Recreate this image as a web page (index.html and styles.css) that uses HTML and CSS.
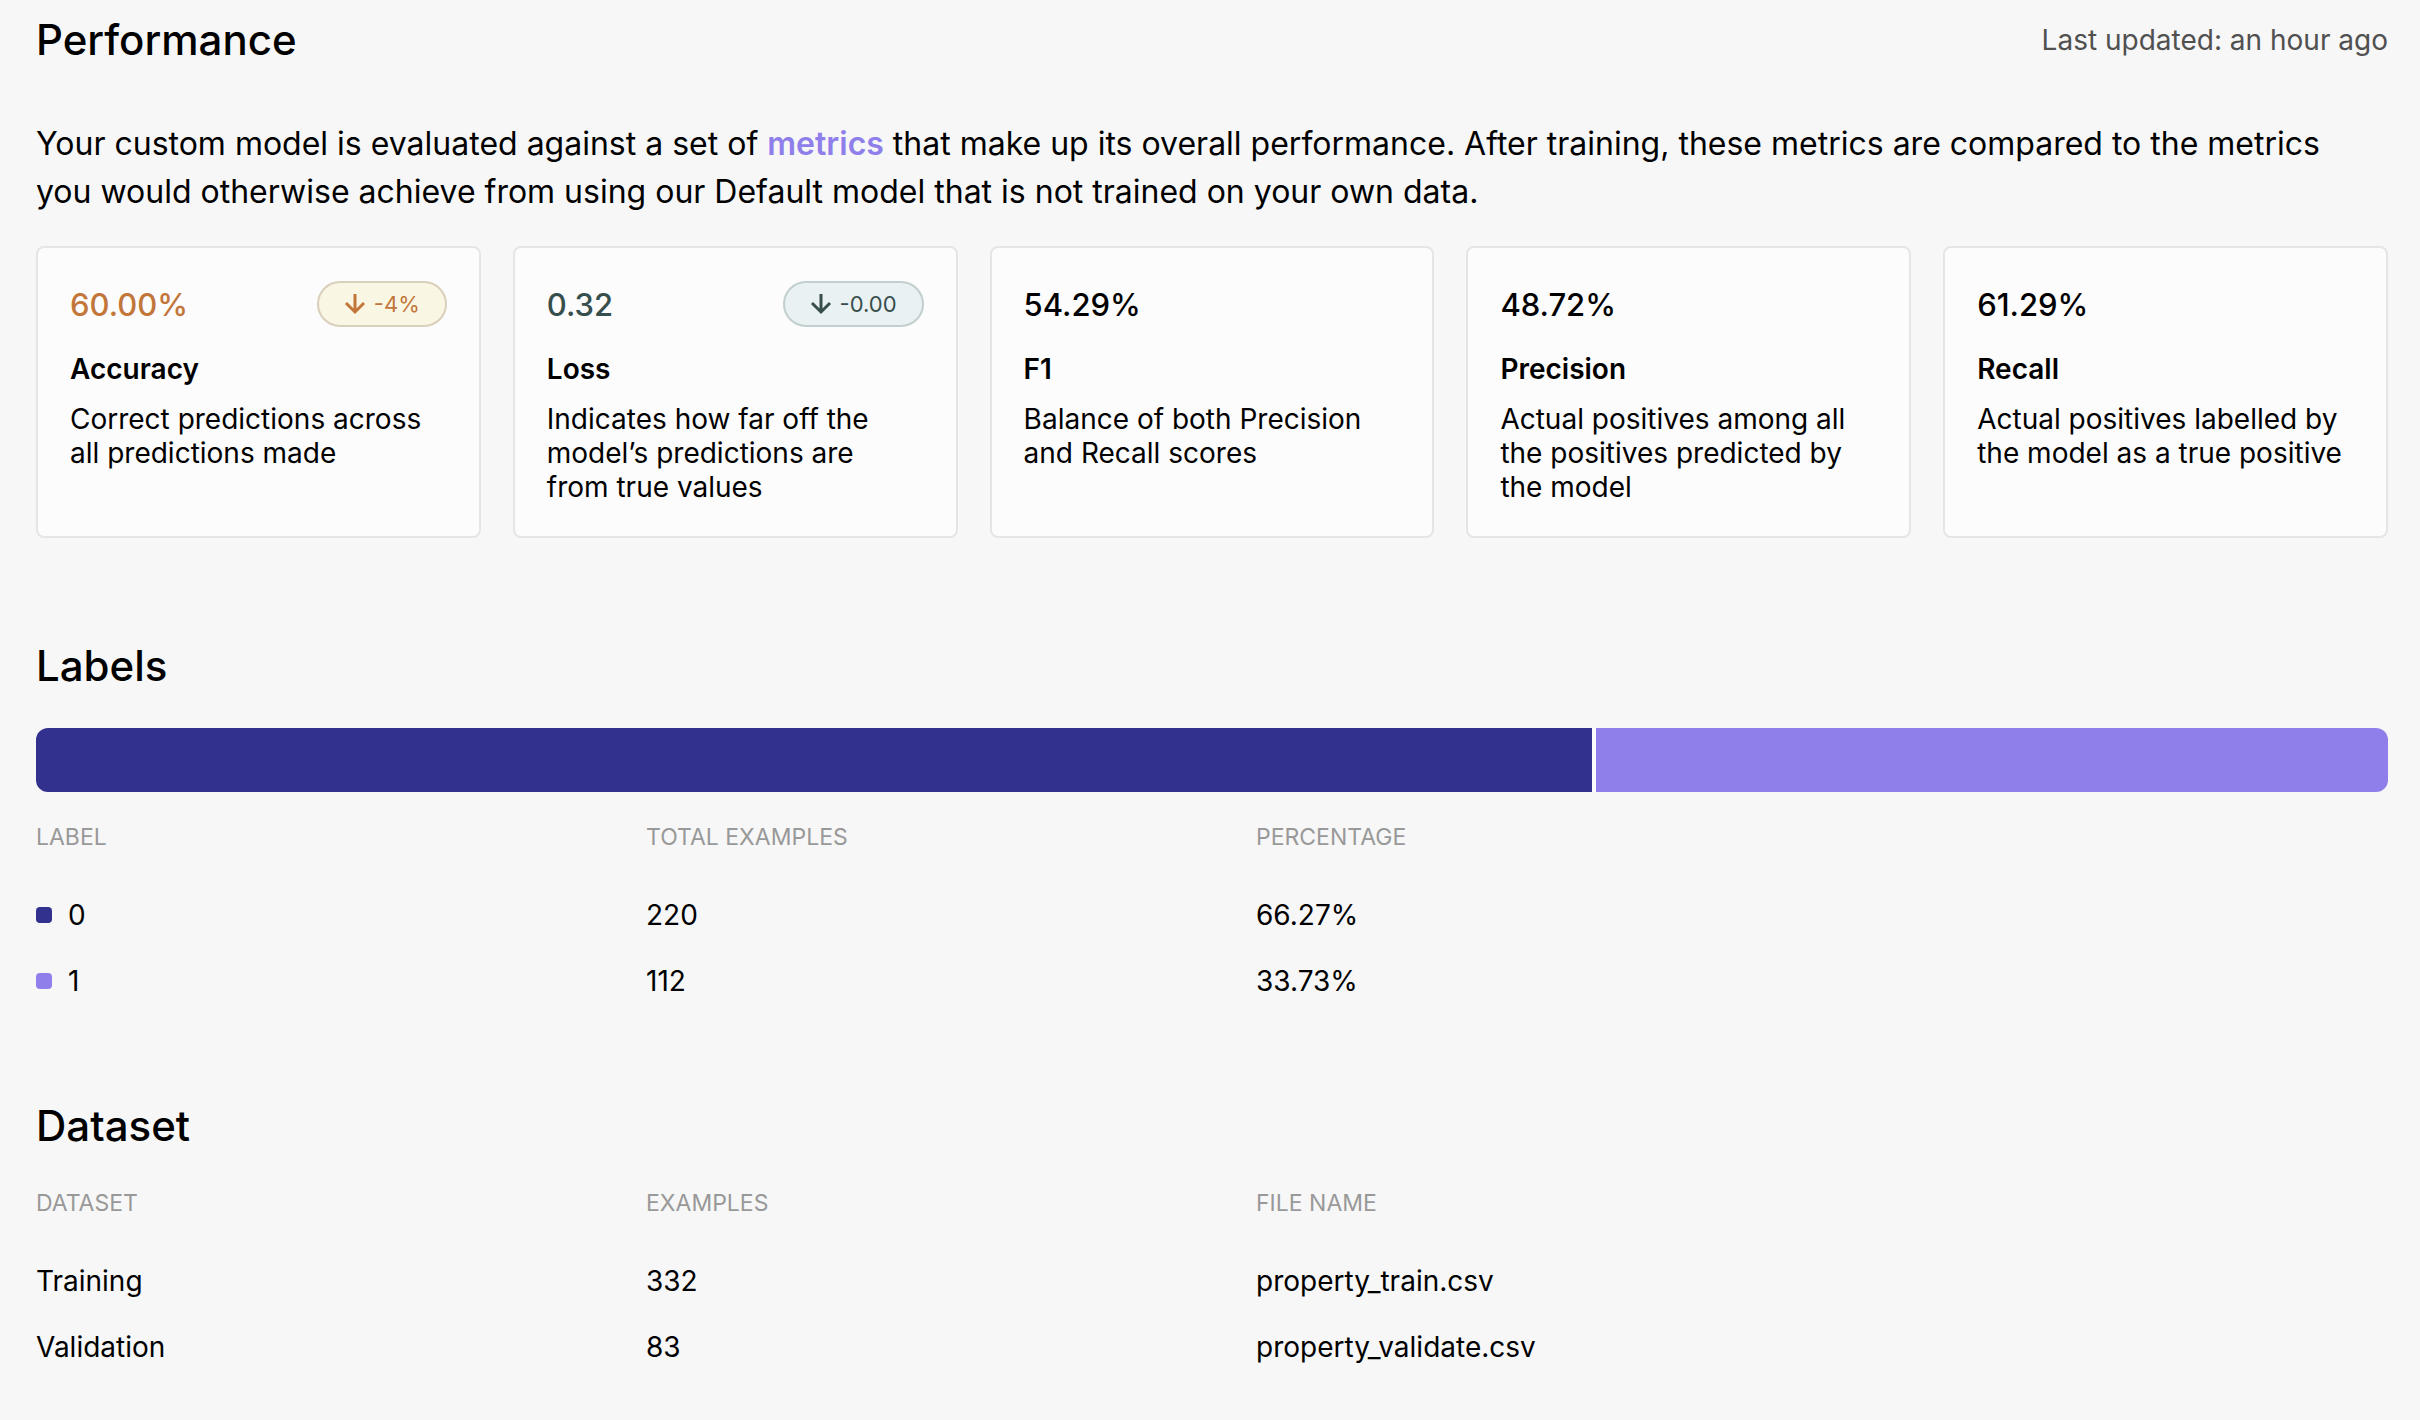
FILE: index.html
```html
<!DOCTYPE html>
<html lang="en">
<head>
<meta charset="utf-8">
<meta name="viewport" content="width=device-width, initial-scale=1">
<title>Model performance</title>
<link rel="stylesheet" href="styles.css">
</head>
<body>
<main class="page">
  <section class="section">
    <header class="section-header">
      <h2 class="title">Performance</h2>
      <p class="updated">Last updated: an hour ago</p>
    </header>
    <p class="intro">Your custom model is evaluated against a set of <a class="link" href="#metrics">metrics</a> that make up its overall performance. After training, these metrics are compared to the metrics you would otherwise achieve from using our Default model that is not trained on your own data.</p>
    <div class="cards" id="metrics">
      <article class="card">
        <div class="card-top">
          <span class="value value-worse">60.00%</span>
          <span class="badge badge-worse">
            <svg class="arrow" viewBox="0 0 22 22" aria-hidden="true"><path d="M11 1v18M2 10l9 9 9-9"/></svg>
            -4%
          </span>
        </div>
        <h3 class="card-name">Accuracy</h3>
        <p class="card-text">Correct predictions across all predictions made</p>
      </article>
      <article class="card">
        <div class="card-top">
          <span class="value value-better">0.32</span>
          <span class="badge badge-better">
            <svg class="arrow" viewBox="0 0 22 22" aria-hidden="true"><path d="M11 1v18M2 10l9 9 9-9"/></svg>
            -0.00
          </span>
        </div>
        <h3 class="card-name">Loss</h3>
        <p class="card-text">Indicates how far off the model’s predictions are from true values</p>
      </article>
      <article class="card">
        <div class="card-top"><span class="value">54.29%</span></div>
        <h3 class="card-name">F1</h3>
        <p class="card-text">Balance of both Precision and Recall scores</p>
      </article>
      <article class="card">
        <div class="card-top"><span class="value">48.72%</span></div>
        <h3 class="card-name">Precision</h3>
        <p class="card-text">Actual positives among all the positives predicted by the model</p>
      </article>
      <article class="card">
        <div class="card-top"><span class="value">61.29%</span></div>
        <h3 class="card-name">Recall</h3>
        <p class="card-text">Actual positives labelled by the model as a true positive</p>
      </article>
    </div>
  </section>

  <section class="section">
    <h2 class="title">Labels</h2>
    <div class="bar" role="img" aria-label="Label 0: 66.27%, label 1: 33.73%">
      <div class="bar-part fill-0" style="flex-grow: 66.27"></div>
      <div class="bar-part fill-1" style="flex-grow: 33.73"></div>
    </div>
    <table class="table">
      <thead>
        <tr><th scope="col">LABEL</th><th scope="col">TOTAL EXAMPLES</th><th scope="col">PERCENTAGE</th></tr>
      </thead>
      <tbody>
        <tr><td><span class="label"><span class="swatch fill-0"></span>0</span></td><td>220</td><td>66.27%</td></tr>
        <tr><td><span class="label"><span class="swatch fill-1"></span>1</span></td><td>112</td><td>33.73%</td></tr>
      </tbody>
    </table>
  </section>

  <section class="section">
    <h2 class="title">Dataset</h2>
    <table class="table">
      <thead>
        <tr><th scope="col">DATASET</th><th scope="col">EXAMPLES</th><th scope="col">FILE NAME</th></tr>
      </thead>
      <tbody>
        <tr><td>Training</td><td>332</td><td>property_train.csv</td></tr>
        <tr><td>Validation</td><td>83</td><td>property_validate.csv</td></tr>
      </tbody>
    </table>
  </section>
</main>
</body>
</html>
```
FILE: styles.css
```css
* {
  box-sizing: border-box;
}

body {
  margin: 0;
  background: #f7f7f7;
  color: #000;
  font-family: Inter, "Liberation Sans", sans-serif;
  font-size: 28px;
}

h2,
h3,
p {
  margin: 0;
}

.page {
  display: flex;
  flex-direction: column;
  gap: 80px;
  padding: 8px 32px 32px 36px;
}

.section-header {
  display: flex;
  justify-content: space-between;
  align-items: center;
}

.title {
  font-size: 42px;
  line-height: 64px;
  font-weight: 500;
}

.updated {
  color: #505050;
  line-height: 64px;
}

.intro {
  margin-top: 48px;
  padding-right: 32px;
  font-size: 32px;
  line-height: 48px;
}

.link {
  color: #8f7fea;
  font-weight: 600;
  text-decoration: none;
}

.cards {
  display: grid;
  grid-template-columns: repeat(5, minmax(0, 1fr));
  gap: 32px;
  margin: 30px 0 16px;
}

.card {
  padding: 32px;
  border: 2px solid #e5e5e5;
  border-radius: 8px;
  background: #fcfcfc;
}

.card-top {
  display: flex;
  justify-content: space-between;
  align-items: center;
  height: 48px;
}

.value {
  font-size: 31px;
  font-weight: 500;
}

.value-worse {
  color: #c2763a;
}

.value-better {
  color: #374f4c;
}

.badge {
  display: flex;
  align-items: center;
  gap: 8px;
  height: 46px;
  padding: 0 25px;
  border: 2px solid;
  border-radius: 23px;
  font-size: 22px;
}

.badge-worse {
  border-color: #d9cfbb;
  background: #f9f6e4;
  color: #c2763a;
}

.badge-better {
  border-color: #c1cfce;
  background: #e9f1f3;
  color: #374f4c;
}

.arrow {
  width: 22px;
  height: 22px;
  fill: none;
  stroke: currentColor;
  stroke-width: 3;
}

.card-name {
  margin-top: 24px;
  font-size: 28px;
  line-height: 34px;
  font-weight: 600;
}

.card-text {
  margin-top: 16px;
  padding-right: 8px;
  line-height: 34px;
}

.bar {
  display: flex;
  gap: 4px;
  height: 64px;
  margin-top: 30px;
  border-radius: 12px;
  overflow: hidden;
  background: #fcfcfc;
}

.bar-part {
  flex-basis: 0;
}

.fill-0 {
  background: #32318e;
}

.fill-1 {
  background: #8f7fea;
}

.table {
  width: 100%;
  margin-top: 12px;
  table-layout: fixed;
  border-collapse: collapse;
}

.table th {
  width: 610px;
  height: 78px;
  padding: 0 0 12px;
  color: #999;
  font-size: 23px;
  font-weight: 400;
  text-align: left;
}

.table th:last-child {
  width: auto;
}

.table td {
  height: 66px;
  padding: 0;
}

.label {
  display: flex;
  align-items: center;
  gap: 16px;
}

.swatch {
  width: 16px;
  height: 16px;
  border-radius: 4px;
}
```
